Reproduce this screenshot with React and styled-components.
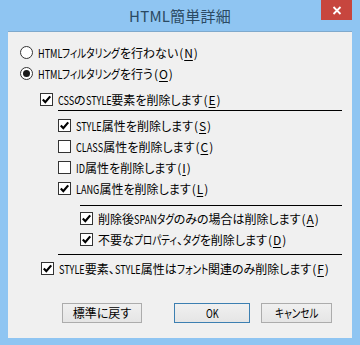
import React, { useLayoutEffect, useRef, useState } from "react";
import styled, { createGlobalStyle } from "styled-components";

const GlobalStyle = createGlobalStyle`
  html, body {
    margin: 0;
    padding: 0;
    background: #8fc5f2;
  }
  * {
    box-sizing: border-box;
  }
`;

const Window = styled.div`
  width: 360px;
  height: 345px;
  background: #8fc5f2;
  padding: 0 8px 7px 8px;
  display: flex;
  flex-direction: column;
  font-family: "Noto Sans CJK JP", "Noto Sans", sans-serif;
  font-feature-settings: "palt";
`;

const TitleBar = styled.div`
  position: relative;
  height: 31px;
  flex-shrink: 0;
  display: flex;
  align-items: center;
  justify-content: center;
`;

const Title = styled.div`
  font-size: 15px;
  color: #2b4a63;
  letter-spacing: 0.2px;
  margin-top: -1px;
`;

const CloseButton = styled.div`
  position: absolute;
  top: 0;
  right: 0;
  width: 31px;
  height: 20px;
  background: #c7463e;
  display: flex;
  align-items: center;
  justify-content: center;
`;

const Body = styled.div`
  flex: 1;
  background: #f0f0f0;
  border-top: 1px solid #7fa9cc;
  padding-top: 10px;
  display: flex;
  flex-direction: column;
`;

const Row = styled.div`
  height: 21px;
  display: flex;
  align-items: center;
  padding-left: ${(p) => p.$indent}px;
  margin-top: ${(p) => p.$top || 0}px;
  font-size: 12px;
  color: #000;
  white-space: nowrap;
`;

const Label = styled.span`
  margin-left: 5px;
  line-height: 1;
`;

const NarrowOuter = styled.span`
  display: inline-block;
  white-space: nowrap;
`;

const NarrowInner = styled.span`
  display: inline-block;
  transform: scaleX(${(p) => p.$scale});
  transform-origin: left center;
`;

const Paren = styled.span`
  display: inline-block;
  width: 6px;
  text-align: center;
`;

const Hot = styled.u`
  text-decoration-thickness: 1px;
  text-underline-offset: 2px;
`;

const Box = styled.span`
  width: 13px;
  height: 13px;
  border: 1px solid #333;
  background: #fff;
  flex-shrink: 0;
  display: flex;
  align-items: center;
  justify-content: center;
`;

const Circle = styled.span`
  width: 13px;
  height: 13px;
  border-radius: 50%;
  border: 1px solid #333;
  background: #fff;
  flex-shrink: 0;
  display: flex;
  align-items: center;
  justify-content: center;

  &::after {
    content: "";
    display: ${(p) => (p.$on ? "block" : "none")};
    width: 7px;
    height: 7px;
    border-radius: 50%;
    background: #1a1a1a;
  }
`;

const Separator = styled.div`
  height: 1px;
  background: #000;
  margin-top: ${(p) => p.$top}px;
  margin-left: ${(p) => p.$left}px;
  margin-right: 10px;
`;

const ButtonRow = styled.div`
  display: flex;
  padding-left: 54px;
  margin-top: 24px;
`;

const Button = styled.div`
  width: ${(p) => p.$w}px;
  height: 20px;
  margin-left: ${(p) => p.$gap || 0}px;
  border: 1px solid ${(p) => (p.$default ? "#3c7fb1" : "#acacac")};
  background: linear-gradient(#f0f0f0, #e5e5e5);
  font-size: 12px;
  line-height: 1;
  display: flex;
  align-items: center;
  justify-content: center;
  color: #000;
  white-space: nowrap;
`;

// the dialog font has narrow katakana and latin letters, full width kanji/hiragana
const SCALES = { kata: 0.8, latin: 0.76 };

const Narrow = ({ scale, children }) => {
  const inner = useRef(null);
  const [w, setW] = useState(null);

  useLayoutEffect(() => {
    const el = inner.current;
    const measure = () => setW(el.offsetWidth * scale);
    measure();
    const ro = new ResizeObserver(measure);
    ro.observe(el);
    return () => ro.disconnect();
  }, [scale]);

  return (
    <NarrowOuter style={w ? { width: w } : undefined}>
      <NarrowInner ref={inner} $scale={scale}>
        {children}
      </NarrowInner>
    </NarrowOuter>
  );
};

const kindOf = (ch) => {
  if (/[\u30A0-\u30FF]/.test(ch)) return "kata";
  if (/[A-Za-z]/.test(ch)) return "latin";
  return "full";
};

const Text = ({ children }) => {
  const runs = [];
  for (const ch of children) {
    const k = kindOf(ch);
    const last = runs[runs.length - 1];
    if (last && last.k === k) last.s += ch;
    else runs.push({ k, s: ch });
  }
  return runs.map((r, i) =>
    r.k === "full" ? (
      <React.Fragment key={i}>{r.s}</React.Fragment>
    ) : (
      <Narrow key={i} scale={SCALES[r.k]}>
        {r.s}
      </Narrow>
    )
  );
};

const LabelText = ({ text, hot }) => (
  <Label>
    <Text>{text}</Text>
    <Paren>(</Paren>
    <Hot>{hot}</Hot>
    <Paren>)</Paren>
  </Label>
);

const Check = () => (
  <svg width="11" height="11" viewBox="0 0 11 11">
    <path d="M1.8 5.6 L4.3 8.2 L9.2 2.4" fill="none" stroke="#000" strokeWidth="2.2" />
  </svg>
);

const CheckRow = ({ indent, top, on, text, hot }) => (
  <Row $indent={indent} $top={top}>
    <Box>{on && <Check />}</Box>
    <LabelText text={text} hot={hot} />
  </Row>
);

const RadioRow = ({ indent, top, on, text, hot }) => (
  <Row $indent={indent} $top={top}>
    <Circle $on={on} />
    <LabelText text={text} hot={hot} />
  </Row>
);

export default function App() {
  return (
    <>
      <GlobalStyle />
      <Window>
        <TitleBar>
          <Title>HTML簡単詳細</Title>
          <CloseButton>
            <svg width="10" height="9" viewBox="0 0 10 9">
              <path d="M1.5 1 L8.5 8 M8.5 1 L1.5 8" stroke="#fff" strokeWidth="1.8" />
            </svg>
          </CloseButton>
        </TitleBar>
        <Body>
          <RadioRow indent={12} text="HTMLフィルタリングを行わない" hot="N" />
          <RadioRow indent={12} on text="HTMLフィルタリングを行う" hot="O" />
          <CheckRow indent={32} top={5} on text="CSSのSTYLE要素を削除します" hot="E" />
          <Separator $top={0} $left={50} />
          <CheckRow indent={50} top={4} on text="STYLE属性を削除します" hot="S" />
          <CheckRow indent={50} text="CLASS属性を削除します" hot="C" />
          <CheckRow indent={50} text="ID属性を削除します" hot="I" />
          <CheckRow indent={50} on text="LANG属性を削除します" hot="L" />
          <Separator $top={6} $left={72} />
          <CheckRow indent={72} top={2} on text="削除後SPANタグのみの場合は削除します" hot="A" />
          <CheckRow indent={72} on text="不要なプロパティ、タグを削除します" hot="D" />
          <Separator $top={4} $left={50} />
          <CheckRow indent={33} top={3} on text="STYLE要素、STYLE属性はフォント関連のみ削除します" hot="F" />
          <ButtonRow>
            <Button $w={80}>
              <Text>標準に戻す</Text>
            </Button>
            <Button $w={76} $gap={32} $default>
              <Text>OK</Text>
            </Button>
            <Button $w={71} $gap={11}>
              <Text>キャンセル</Text>
            </Button>
          </ButtonRow>
        </Body>
      </Window>
    </>
  );
}
